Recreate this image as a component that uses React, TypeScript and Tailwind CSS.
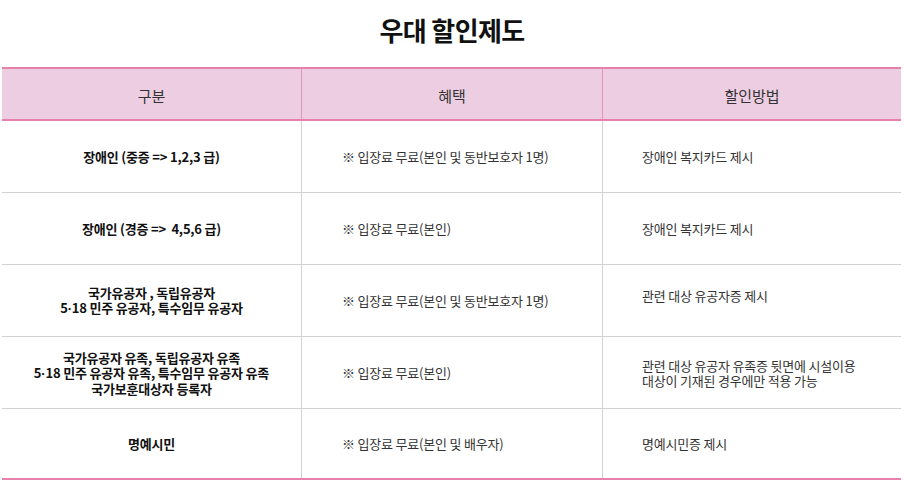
const rows: { target: string[]; benefit: string; method: string[]; methodClass?: string }[] = [
  {
    target: ['장애인 (중증 => 1,2,3 급)'],
    benefit: '※ 입장료 무료(본인 및 동반보호자 1명)',
    method: ['장애인 복지카드 제시'],
  },
  {
    target: ['장애인 (경증 =>  4,5,6 급)'],
    benefit: '※ 입장료 무료(본인)',
    method: ['장애인 복지카드 제시'],
  },
  {
    target: ['국가유공자 , 독립유공자', '5·18 민주 유공자, 특수임무 유공자'],
    benefit: '※ 입장료 무료(본인 및 동반보호자 1명)',
    method: ['관련 대상 유공자증 제시'],
    methodClass: 'pb-[10px]',
  },
  {
    target: ['국가유공자 유족, 독립유공자 유족', '5·18 민주 유공자 유족, 특수임무 유공자 유족', '국가보훈대상자 등록자'],
    benefit: '※ 입장료 무료(본인)',
    method: ['관련 대상 유공자 유족증 뒷면에 시설이용', '대상이 기재된 경우에만 적용 가능'],
  },
  {
    target: ['명예시민'],
    benefit: '※ 입장료 무료(본인 및 배우자)',
    method: ['명예시민증 제시'],
  },
]

// the middle dot in "5·18" is full width in the CJK font, so set it in a Latin one
function Target({ text }: { text: string }) {
  const parts = text.split('·')
  if (parts.length === 1) return <span className="whitespace-pre">{text}</span>
  return (
    <span className="whitespace-pre">
      {parts[0]}
      <span className="font-['Liberation_Sans',sans-serif]">·</span>
      {parts[1]}
    </span>
  )
}

export default function App() {
  return (
    <div className="w-[904px] h-[487px] bg-white font-['Noto_Sans_CJK_KR','Noto_Sans',sans-serif] text-[#333]">
      <h1 className="pt-[13px] mb-[21px] h-[46px] text-center text-[26px] leading-[34px] font-bold text-[#111] tracking-[-0.6px]">
        우대 할인제도
      </h1>

      <div className="mx-[2px] w-[899px]">
        <div className="grid grid-cols-[299px_301px_299px] h-[54px] bg-[#edcde1] border-y-2 border-[#e97fab] text-[15px] text-[#333]">
          <div className="flex items-center justify-center pt-[4px]">구분</div>
          <div className="flex items-center justify-center pt-[4px] border-l border-[#e994bd]">혜택</div>
          <div className="flex items-center justify-center pt-[4px] border-l border-[#e994bd]">할인방법</div>
        </div>

        {rows.map((row, i) => {
          const last = i === rows.length - 1
          return (
            <div
              key={i}
              className={
                last
                  ? 'grid grid-cols-[299px_301px_299px] h-[71px] border-b-2 border-[#ea80ad] text-[13px] leading-[15px]'
                  : 'grid grid-cols-[299px_301px_299px] h-[72px] border-b border-[#d2d2d2] text-[13px] leading-[15px]'
              }
            >
              <div className="flex flex-col items-center justify-center text-center font-bold text-[#111] tracking-[-0.2px]">
                {row.target.map((t) => (
                  <Target key={t} text={t} />
                ))}
              </div>
              <div className="flex items-center pl-[40px] border-l border-[#d2d2d2] tracking-[-0.2px]">{row.benefit}</div>
              <div
                className={
                  'flex flex-col justify-center pl-[39px] border-l border-[#d2d2d2] tracking-[-0.2px] ' +
                  (row.methodClass ?? '')
                }
              >
                {row.method.map((m) => (
                  <span key={m}>{m}</span>
                ))}
              </div>
            </div>
          )
        })}
      </div>
    </div>
  )
}
